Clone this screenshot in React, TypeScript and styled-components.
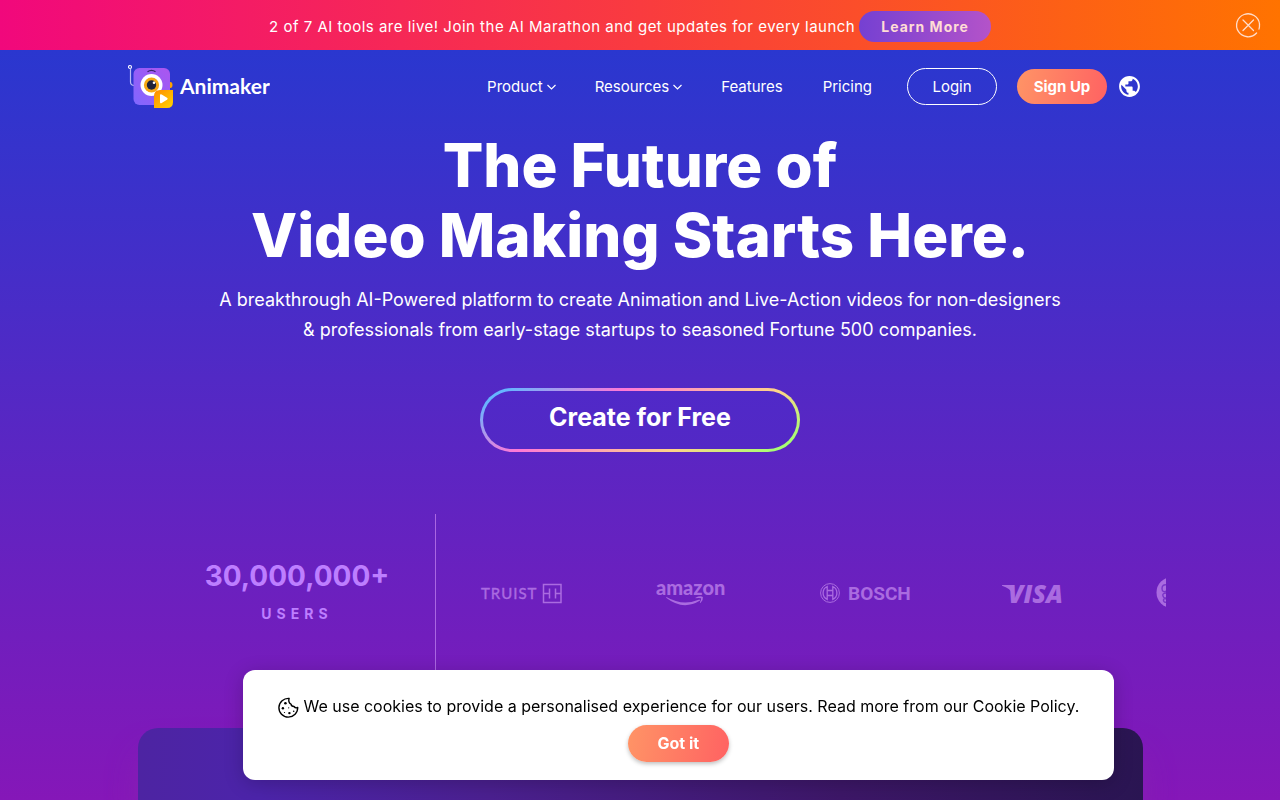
import React from "react";
import styled, { createGlobalStyle } from "styled-components";

const GlobalStyle = createGlobalStyle`
  * { box-sizing: border-box; }
  body { margin: 0; font-family: Inter, "Liberation Sans", sans-serif; color: #fff; }
  h1, p { margin: 0; font-weight: inherit; }
  button, a { font-family: inherit; color: inherit; text-decoration: none; }
  button { border: 0; background: none; padding: 0; cursor: pointer; }
  svg { display: block; }
`;

const Page = styled.div`
  min-height: 100vh;
  display: flex;
  flex-direction: column;
`;

const Announcement = styled.div`
  height: 50px;
  padding: 2px 20px 0 24px;
  display: flex;
  align-items: center;
  background: linear-gradient(90deg, #f1087c, #f93b3f 50%, #ff7300);
`;

const AnnouncementText = styled.p`
  flex: 1;
  display: flex;
  align-items: center;
  justify-content: center;
  gap: 4px;
  font-size: 15px;
  letter-spacing: 0.033em;
`;

const LearnMore = styled.a`
  height: 31px;
  padding: 0 22px;
  border-radius: 16px;
  display: flex;
  align-items: center;
  font-size: 14px;
  font-weight: 700;
  letter-spacing: 1px;
  color: #ffdcd5;
  background: linear-gradient(90deg, #7540d2, #b453c9);
`;

const Main = styled.div`
  flex: 1;
  display: flex;
  flex-direction: column;
  background: linear-gradient(180deg, #2a37cf, #8517b8);
`;

const Header = styled.header`
  width: 80%;
  height: 72px;
  margin: 0 auto;
  display: flex;
  align-items: center;
  justify-content: space-between;
`;

const Brand = styled.a`
  display: block;
`;

const Nav = styled.nav`
  display: flex;
  align-items: center;
  font-size: 15px;
  padding-right: 10px;
`;

const NavItem = styled.a`
  display: flex;
  align-items: center;
  gap: 4px;
  margin-right: 40px;
`;

const Pill = styled.a<{ $solid?: boolean }>`
  width: 90px;
  height: ${(p) => (p.$solid ? 35 : 37)}px;
  border-radius: 19px;
  display: flex;
  align-items: center;
  justify-content: center;
  border: ${(p) => (p.$solid ? "0" : "1px solid #fff")};
  font-weight: ${(p) => (p.$solid ? 700 : 400)};
  background: ${(p) => (p.$solid ? "linear-gradient(100deg, #ff9466, #ff6262)" : "none")};
`;

const NavActions = styled.div`
  display: flex;
  align-items: center;
  gap: 20px;
  margin-left: -5px;
`;

const LanguageButton = styled.button`
  margin-left: 10px;
`;

const Hero = styled.section`
  display: flex;
  flex-direction: column;
  align-items: center;
  text-align: center;
  padding-top: 8px;
`;

const Title = styled.h1`
  font-size: 60px;
  line-height: 70px;
  font-weight: 800;
`;

const Lead = styled.p`
  margin-top: 15px;
  font-size: 18px;
  line-height: 30px;
`;

const CreateButton = styled.button`
  width: 320px;
  height: 64px;
  margin-top: 43px;
  padding-bottom: 6px;
  border: 3px solid transparent;
  border-radius: 32px;
  font-size: 25px;
  font-weight: 700;
  background:
    linear-gradient(#5029c8, #5328c5) padding-box,
    linear-gradient(150deg, #66b5ff 7%, #ff78d6 34%, #ffd488 70%, #a6ff72 94%) border-box;
`;

const Customers = styled.section`
  margin: 62px 114px 0 159px;
  height: 160px;
  display: flex;
`;

const Users = styled.div`
  width: 277px;
  padding-bottom: 5px;
  display: flex;
  flex-direction: column;
  align-items: center;
  justify-content: center;
  gap: 11px;
  color: #bd7eff;
  border-right: 1px solid #aa66e2;
`;

const UsersCount = styled.strong`
  font-size: 28px;
  line-height: 34px;
`;

const UsersLabel = styled.span`
  font-size: 14px;
  line-height: 20px;
  font-weight: 700;
  letter-spacing: 5px;
`;

const Logos = styled.div`
  flex: 1;
  min-width: 0;
  overflow: hidden;
  display: flex;
  align-items: center;
  padding-left: 44px;
  gap: 92px;

  svg { flex: none; }
`;

const Preview = styled.section`
  flex: 1;
  min-height: 72px;
  width: 100%;
  max-width: 1005px;
  margin: 54px auto 0;
  border-radius: 20px 20px 0 0;
  background: linear-gradient(90deg, #4d24a2, #4c24aa 12%, #4b2090 35%, #3d1768 70%, #2a1552);
  box-shadow: 0 24px 32px -4px #8822b2;
`;

const CookieNotice = styled.aside`
  position: fixed;
  left: 19%;
  bottom: 20px;
  width: 68%;
  min-height: 110px;
  padding: 24px 20px 18px;
  border-radius: 12px;
  display: flex;
  flex-direction: column;
  align-items: center;
  gap: 7px;
  background: #fff;
  color: #000;
  box-shadow: 0 4px 20px rgba(0, 0, 0, 0.2);
`;

const CookieText = styled.p`
  display: flex;
  align-items: flex-end;
  gap: 4px;
  font-size: 16px;
  line-height: 24px;
`;

const AcceptButton = styled.button`
  width: 101px;
  height: 37px;
  padding-bottom: 1px;
  border-radius: 19px;
  font-size: 16px;
  font-weight: 700;
  color: #fff;
  background: linear-gradient(100deg, #ff9466, #ff6262);
  box-shadow: 0 2px 4px rgba(0, 0, 0, 0.25);
`;

const Chevron = () => (
  <svg width="8" height="10" viewBox="0 0 8 10" fill="none" stroke="#fff" strokeWidth="1.2" overflow="visible" aria-hidden="true">
    <path d="M.5 4 4.500 8 8.500 4" />
  </svg>
);

const CloseIcon = () => (
  <svg width="24" height="26" viewBox="0 1 24 26" fill="none" stroke="#ffdccb" strokeWidth="1.3" strokeLinecap="round" overflow="visible" aria-hidden="true">
    <path d="M23 17.200Q23.600 15 23.500 12A11.500 11.500 0 1 0 20.600 21" />
    <path d="m7 8 10.500 10.500M17.500 8 7 18.500" />
  </svg>
);

const GlobeIcon = () => (
  <svg width="25" height="25" viewBox="0 0 24 24" fill="#fff" aria-hidden="true">
    <path d="M12 2C6.48 2 2 6.48 2 12s4.48 10 10 10 10-4.48 10-10S17.52 2 12 2zm-1 17.93c-3.95-.49-7-3.85-7-7.93 0-.62.08-1.21.21-1.79L9 15v1c0 1.1.9 2 2 2v1.93zm6.900-2.540c-.26-.81-1-1.390-1.900-1.390h-1v-3c0-.55-.45-1-1-1H8v-2h2c.55 0 1-.45 1-1V7h2c1.100 0 2-.9 2-2v-.41c2.930 1.190 5 4.060 5 7.410 0 2.080-.8 3.970-2.100 5.390z" />
  </svg>
);

const CookieIcon = () => (
  <svg width="22" height="22" viewBox="0 -1 22 22" fill="none" stroke="#000" strokeWidth="1.4" strokeLinejoin="round" aria-hidden="true">
    <path d="M12.1 1.400A9.400 9.400 0 1 0 20.700 10.400C19.300 11.200 17.900 10.800 17 9.500 15.400 9.500 14.200 8.900 14 7.200 11.900 6.400 11.300 3.400 12.100 1.400Z" />
    <g fill="#000" stroke="none">
      <circle cx="8.400" cy="6.200" r="1.300" /><circle cx="5.900" cy="11.200" r="1.200" />
      <circle cx="12.400" cy="16.100" r="1.200" /><circle cx="11.700" cy="10.800" r=".6" />
      <circle cx="7.500" cy="15.500" r=".6" /><circle cx="16.700" cy="14.200" r=".8" />
    </g>
  </svg>
);

const AnimakerLogo = () => (
  <svg width="142" height="46" viewBox="0 0 142 46" role="img" aria-label="Animaker">
    <defs>
      <linearGradient id="body" x1="0" y1="1" x2="1" y2="0"><stop stopColor="#8067ff" /><stop offset="1" stopColor="#ac55ef" /></linearGradient>
      <linearGradient id="play" x1="0" y1="0" x2="1" y2="1"><stop stopColor="#ff8a00" /><stop offset="1" stopColor="#ffd500" /></linearGradient>
    </defs>
    <circle cx="2" cy="4" r="1.500" fill="none" stroke="#fff" strokeWidth="1.1" />
    <path d="M2.500 5.500V19q0 3.500 4 3.500" fill="none" stroke="#b9bbf5" strokeWidth="1.200" />
    <path d="M41 19h1.200q2.300 0 2.300 3T42.200 25H41z" fill="#ffa200" />
    <rect x="5.500" y="5" width="36.500" height="37" rx="6" fill="url(#body)" />
    <path d="M19.500 8.700q4-2.800 8 0" fill="none" stroke="#36236d" strokeWidth="1.300" />
    <circle cx="23.500" cy="22" r="11" fill="#fff" />
    <circle cx="23.500" cy="22" r="7.600" fill="#f7a814" />
    <circle cx="23.500" cy="22" r="4.700" fill="#20233a" />
    <circle cx="26" cy="19.800" r="1.300" fill="#fff" />
    <path d="M26 45V33q0-6 6-6h13v12q0 6-6 6z" fill="url(#play)" />
    <path d="M32 32.400q0-1.800 1.700-.9l5.300 3.200q1.500 1 0 2l-5.300 3.300q-1.700 1-1.700-.9z" fill="#fff" />
    <text x="52" y="31" fill="#fff" fontFamily="Lato, sans-serif" fontSize="21" fontWeight="700">Animaker</text>
  </svg>
);

const LOGO = "#aa6be0";

const TruistLogo = () => (
  <svg width="84" height="34" viewBox="0 0 84 34" fill={LOGO} stroke={LOGO} role="img" aria-label="Truist">
    <text x="1" y="22" fontFamily="Lato, sans-serif" fontSize="15" letterSpacing="1" strokeWidth=".4">TRUIST</text>
    <path d="M63.500 7.500h17.500v18H63.500zM69.500 11.500v10M75.500 11.500v10M63.500 16.500h6M75.500 16.500h5.500" fill="none" strokeWidth="1.500" />
  </svg>
);

const AmazonLogo = () => (
  <svg width="72" height="46" viewBox="0 -6 72 46" fill={LOGO} role="img" aria-label="Amazon">
    <text x="0" y="18" fontFamily="Lato, sans-serif" fontSize="20" fontWeight="900">amazon</text>
    <path d="M10.500 20q16 9.500 33 2.500l.6 1q-17 10.500-34-2.700zM39.500 20.700q4.500-2.200 7.400-.8.500 3.400-2.400 6.100l-.7-.4q1.500-2.400 1.300-4.400-2.100-.4-5.600 0z" />
  </svg>
);

const BoschLogo = () => (
  <svg width="90" height="34" viewBox="0 0 90 34" fill={LOGO} overflow="visible" role="img" aria-label="Bosch">
    <g fill="none" stroke={LOGO}>
      <circle cx="10" cy="16" r="9.400" />
      <path d="M7.200 9.500a7.200 7.200 0 0 0 0 13zM12.800 9.500a7.200 7.200 0 0 1 0 13zM7.200 13.500h5.600M7.200 18.500h5.600" strokeWidth="1.300" />
    </g>
    <text x="28" y="23" fontFamily="Roboto, sans-serif" fontSize="19" fontWeight="700">BOSCH</text>
  </svg>
);

const VisaLogo = () => (
  <svg width="62" height="34" viewBox="0 0 62 34" fill={LOGO} overflow="visible" role="img" aria-label="Visa">
    <path d="M0 8h8q2 0 2.500 2l1.500 8Q8 11 0 8.800z" />
    <text x="6" y="26" fontFamily="'Open Sans', sans-serif" fontSize="25" fontWeight="800" fontStyle="italic">VISA</text>
  </svg>
);

const RoundLogo = () => (
  <svg width="34" height="34" viewBox="0 0 34 34" role="img" aria-label="General Electric">
    <circle cx="16" cy="15.500" r="15.500" fill={LOGO} />
    <path d="M11 8q-5-1-5 3.500T11 14M11 16q-5 0-4 3t4 1.500M11 22q-4-1-3.500 1.500T11 25" fill="none" stroke="#7a35c8" strokeWidth="1.400" />
  </svg>
);

export default function App() {
  return (
    <Page>
      <GlobalStyle />
      <Announcement>
        <AnnouncementText>
          2 of 7 AI tools are live! Join the AI Marathon and get updates for every launch
          <LearnMore href="#marathon">Learn More</LearnMore>
        </AnnouncementText>
        <button aria-label="Close announcement"><CloseIcon /></button>
      </Announcement>
      <Main>
        <Header>
          <Brand href="#home"><AnimakerLogo /></Brand>
          <Nav>
            <NavItem href="#product">Product <Chevron /></NavItem>
            <NavItem href="#resources">Resources <Chevron /></NavItem>
            <NavItem href="#features">Features</NavItem>
            <NavItem href="#pricing">Pricing</NavItem>
            <NavActions>
              <Pill href="#login">Login</Pill>
              <Pill href="#signup" $solid>Sign Up</Pill>
            </NavActions>
            <LanguageButton aria-label="Choose language"><GlobeIcon /></LanguageButton>
          </Nav>
        </Header>
        <Hero>
          <Title>The Future of<br />Video Making Starts Here.</Title>
          <Lead>
            A breakthrough AI-Powered platform to create Animation and Live-Action videos for non-designers<br />
            &amp; professionals from early-stage startups to seasoned Fortune 500 companies.
          </Lead>
          <CreateButton>Create for Free</CreateButton>
        </Hero>
        <Customers>
          <Users>
            <UsersCount>30,000,000+</UsersCount>
            <UsersLabel>USERS</UsersLabel>
          </Users>
          <Logos>
            <TruistLogo />
            <AmazonLogo />
            <BoschLogo />
            <VisaLogo />
            <RoundLogo />
          </Logos>
        </Customers>
        <Preview aria-label="Video preview" />
      </Main>
      <CookieNotice aria-label="Cookie notice">
        <CookieText>
          <CookieIcon />
          <span>We use cookies to provide a personalised experience for our users. Read more from our <a href="#cookies">Cookie Policy.</a></span>
        </CookieText>
        <AcceptButton>Got it</AcceptButton>
      </CookieNotice>
    </Page>
  );
}
